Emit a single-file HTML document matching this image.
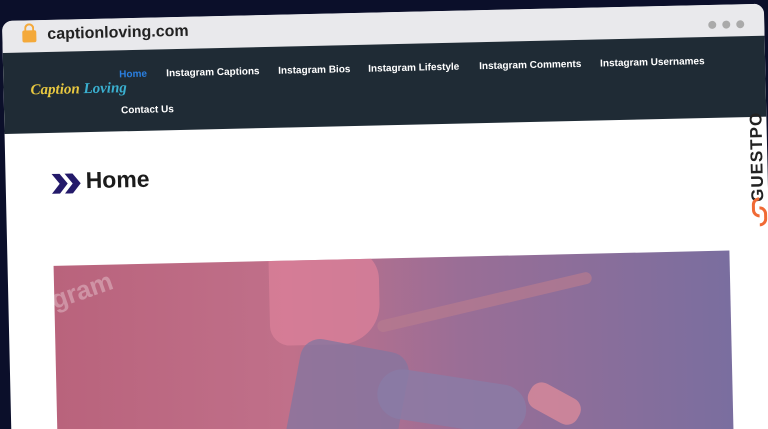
<!DOCTYPE html>
<html><head><style>
*{margin:0;padding:0;box-sizing:border-box}
html,body{width:768px;height:429px;overflow:hidden}
body{background:#0b0f2a;position:relative;font-family:"Liberation Sans",sans-serif}
.clip{position:absolute;left:0;top:0;width:768px;height:429px;overflow:hidden}
.win{position:absolute;left:2px;top:21px;width:762px;height:426px;transform:rotate(-1.3deg);transform-origin:0 0;background:#fff;border-radius:10px 10px 0 0;overflow:hidden}
.bar{height:32px;background:#e9e9ec;position:relative}
.lock{position:absolute;left:20px;top:10px;width:14px;height:12px;background:#f4a93a;border-radius:2px}
.lock:before{content:"";position:absolute;left:2px;top:-7px;width:6px;height:8px;border:2px solid #f4a93a;border-bottom:none;border-radius:5px 5px 0 0}
.url{position:absolute;left:45px;top:6px;font-size:16px;color:#222;font-weight:bold}
.dots{position:absolute;right:20px;top:11px}
.dots i{display:inline-block;width:8px;height:8px;border-radius:50%;background:#aaa;margin-left:6px}
.nav{height:81px;background:#1f2b35;position:relative;color:#fff;font-weight:bold;font-size:10px}
.nav span{position:absolute;top:19px;white-space:nowrap}
.logo{position:absolute;left:27px;top:30px;font-family:"Liberation Serif",serif;font-style:italic;font-size:15px;color:#e8c840}
.logo b{color:#3ab0d0}
h1{position:absolute;left:80px;top:148px;font-size:23px;color:#1b1b1b}
.chev{position:absolute;left:46px;top:154px}
.img{position:absolute;left:46px;top:246px;width:676px;height:240px;background:linear-gradient(90deg,#b9637c 0%,#c0708a 35%,#9a6e96 60%,#7a6e9f 100%);overflow:hidden}
.gp{position:absolute;left:742px;top:198px;transform:rotate(-90deg);transform-origin:0 0;font-weight:900;font-size:17px;color:#222;white-space:nowrap;letter-spacing:1px}
</style></head><body><div class="clip">
<div class="win">
<div class="bar"><div class="lock"></div><div class="url">captionloving.com</div><div class="dots"><i></i><i></i><i></i></div></div>
<div class="nav">
<div class="logo">Caption <b>Loving</b></div>
<span style="left:116px;color:#2a7fe0">Home</span>
<span style="left:163px">Instagram Captions</span>
<span style="left:275px">Instagram Bios</span>
<span style="left:365px">Instagram Lifestyle</span>
<span style="left:476px">Instagram Comments</span>
<span style="left:597px">Instagram Usernames</span>
<span style="left:117px;top:55px">Contact Us</span>
</div>
<svg class="chev" width="30" height="20" viewBox="0 0 30 20"><path d="M0 0h8l8 10-8 10H0l8-10z M13 0h8l8 10-8 10h-8l8-10z" fill="#241a6a"/></svg>
<h1>Home</h1>
<div class="img">
<div style="position:absolute;left:-4px;top:10px;font-size:26px;font-weight:bold;color:rgba(255,255,255,.3);transform:rotate(-18deg)">gram</div>
<div style="position:absolute;left:215px;top:-10px;width:110px;height:95px;background:#d98098;border-radius:10px 30px 40px 20px;opacity:.8"></div>
<div style="position:absolute;left:230px;top:85px;width:110px;height:170px;background:#86769f;border-radius:20px;transform:rotate(12deg);opacity:.8"></div>
<div style="position:absolute;left:320px;top:120px;width:150px;height:50px;background:#8a7ca6;border-radius:25px;transform:rotate(10deg);opacity:.8"></div>
<div style="position:absolute;left:470px;top:135px;width:55px;height:28px;background:#d98a9a;border-radius:12px;transform:rotate(30deg);opacity:.8"></div>
<div style="position:absolute;left:320px;top:40px;width:220px;height:12px;background:#b77a8e;border-radius:8px;transform:rotate(-12deg);opacity:.7"></div>
</div>
<div class="gp">GUESTPO</div>
<svg style="position:absolute;left:744px;top:192px" width="18" height="32" viewBox="0 0 18 32"><path d="M9 3a6 6 0 0 0-6 6v5a6 6 0 0 0 6 6M9 29a6 6 0 0 0 6-6v-5a6 6 0 0 0-6-6" stroke="#f06a35" stroke-width="3" fill="none"/></svg>
</div>
</div></body></html>
